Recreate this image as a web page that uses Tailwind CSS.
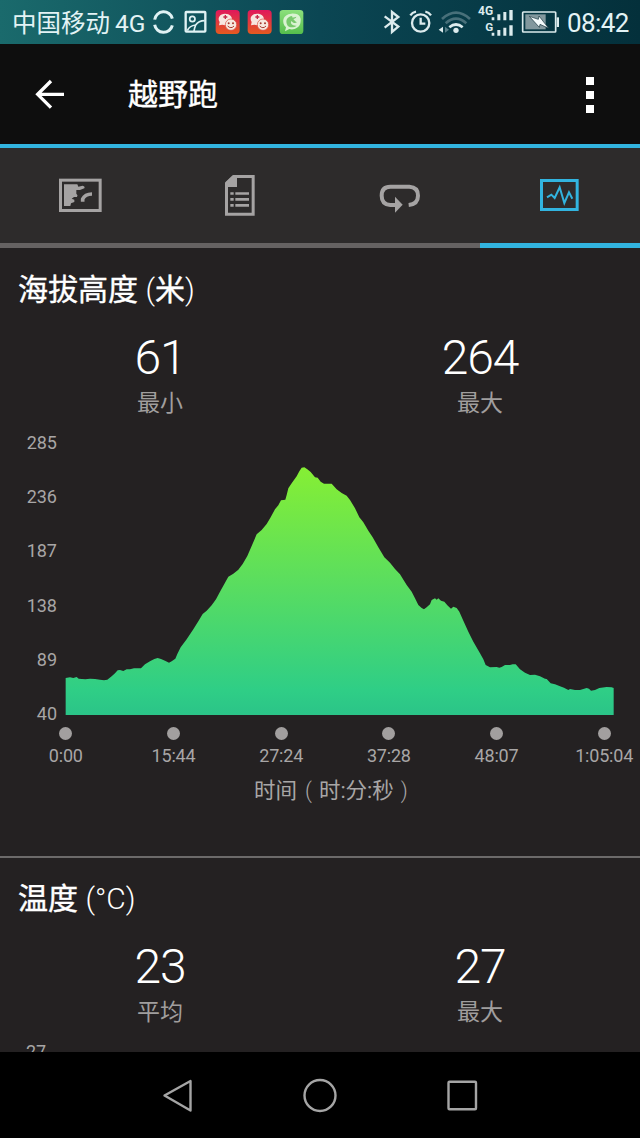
<!DOCTYPE html>
<html lang="zh-CN">
<head>
<meta charset="utf-8">
<title>越野跑</title>
<script src="https://cdn.jsdelivr.net/npm/@tailwindcss/browser@4"></script>
</head>
<body class="bg-black">
<div class="flex h-[1138px] w-[640px] flex-col overflow-hidden bg-[#242122] font-['Roboto','Noto_Sans_CJK_SC',sans-serif] text-white">

  <!-- status bar -->
  <header class="flex h-11 shrink-0 items-center bg-linear-to-r from-[#1a6a6c] via-[#0b4653] via-50% to-[#04303b] text-[#e3f3f5]">
    <div class="ml-3 w-[138px] whitespace-nowrap pt-[3px] text-[24.5px] leading-[41px]">中国移动 <span class="-ml-px">4G</span></div>
    <svg class="h-11 w-40 shrink-0" viewBox="450 0 480 132" fill="none">
      <g stroke="#e0f2f4" stroke-width="7">
        <path d="M464 59A27 27 0 0 1 517 56" stroke-width="9"/>
        <path d="M464 74A27 27 0 0 0 517 76" stroke-width="9"/>
        <rect x="557" y="36" width="59" height="59" rx="2" stroke-width="7"/>
        <circle cx="577" cy="57" r="8" stroke-width="5"/>
        <path d="M562 92C567 80 577 76 587 75C593 66 603 62 614 62M582 93C583 86 585 80 587 75" stroke-width="5"/>
      </g>
      <defs>
        <linearGradient id="red" x1="0" y1="0" x2="0" y2="1"><stop stop-color="#e0185c"/><stop offset="1" stop-color="#e45a20"/></linearGradient>
        <linearGradient id="grn" x1="0" y1="0" x2="0" y2="1"><stop stop-color="#8ce07c"/><stop offset="1" stop-color="#55bd4c"/></linearGradient>
        <g id="chat">
          <rect width="72" height="72" rx="11" fill="url(#red)"/>
          <path d="M10 46L12 36C4 24 13 11 28 11S50 20 49 31 38 46 28 46L20 44Z" fill="#f7e6e0"/>
          <path d="M29 15V27M23 21H35" stroke="#c52a4a" stroke-width="4"/>
          <circle cx="46" cy="44" r="17" fill="#f7e9e0" stroke="#d84a3c" stroke-width="2"/>
          <circle cx="39" cy="40" r="3" fill="#a53a30"/><circle cx="52" cy="40" r="3" fill="#a53a30"/>
          <path d="M36 48Q46 58 55 48" stroke="#a53a30" stroke-width="3"/>
        </g>
      </defs>
      <use href="#chat" x="647" y="30"/>
      <use href="#chat" x="743" y="30"/>
      <rect x="839" y="30" width="71" height="72" rx="10" fill="url(#grn)"/>
      <path d="M855 94L858 82C843 67 848 43 874 41S905 54 901 70 878 91 868 87Z" fill="#d9f3d2"/>
      <path d="M877 48C862 49 854 62 863 77C870 84 882 83 890 77C877 78 870 71 874 63C879 68 884 72 891 67C887 65 883 61 880 57C884 56 888 54 889 50C882 53 874 54 877 48Z" fill="#78c96d"/>
    </svg>
    <svg class="ml-[70px] h-11 w-[180px] shrink-0" viewBox="30 0 540 132" fill="none">
      <path d="M44 49L85 80L66 96V36L85 51L44 83" stroke="#dcebed" stroke-width="7"/>
      <g stroke="#dcebed" stroke-width="7">
        <circle cx="152" cy="69" r="26"/>
        <path d="M152 53V71H166"/>
        <path d="M121 46Q127 37 138 35M183 46Q177 37 166 35"/>
      </g>
      <g stroke-width="8">
        <path d="M216 57Q258 19 300 57" stroke="#48707a"/>
        <path d="M227 70Q258 42 289 70" stroke="#48707a"/>
        <path d="M238 82Q258 65 278 82" stroke="#dcebed"/>
      </g>
      <circle cx="258" cy="91" r="8" fill="#dcebed"/>
      <path d="M206 89L219 80V98Z" fill="#dcebed"/><path d="M237 89L225 80V98Z" fill="#58808a"/>
      <g fill="#dcebed" font-family="Roboto" font-weight="700">
        <text x="324" y="46" font-size="36">4G</text>
        <text x="346" y="92" font-size="35">G</text>
      </g>
      <g fill="#dcebed">
        <path d="M365 52h8v9h-8zM382 43h9v18h-9zM400 36h9v25h-9zM418 30h10v31h-10z"/>
        <path d="M365 98h8v9h-8zM382 90h9v17h-9zM400 83h9v24h-9zM418 76h10v31h-10z"/>
      </g>
      <rect x="458" y="36" width="99" height="60" rx="2" stroke="#dcebed" stroke-width="5"/>
      <path d="M560 52h7v29h-7z" fill="#dcebed"/>
      <rect x="466" y="43" width="61" height="45" fill="#82989e"/>
      <path d="M478 49L505 58L507 48L536 85L510 73L508 82Z" fill="#f4fbfc" stroke="#17343d" stroke-width="2"/>
    </svg>
    <div class="ml-[7px] whitespace-nowrap pt-[3px] text-[26px] leading-[41px] tracking-[-0.6px]">08:42</div>
  </header>

  <!-- app bar -->
  <div class="flex h-[104px] shrink-0 items-center border-b-4 border-[#32b4df] bg-[#0e0e0e]">
    <svg class="ml-[34px] size-8" viewBox="102 90 96 96" fill="none" stroke="#fff" stroke-width="10"><path d="M192 139H116M153 99L113 139L153 179"/></svg>
    <h1 class="ml-[62px] pt-0.5 text-[30px] leading-10 [-webkit-text-stroke:0.4px_white]">越野跑</h1>
    <div class="ml-auto mr-[46px] flex flex-col gap-[6px] pt-px">
      <i class="size-2 bg-white"></i><i class="size-2 bg-white"></i><i class="size-2 bg-white"></i>
    </div>
  </div>

  <!-- tabs -->
  <nav class="grid h-[100px] shrink-0 grid-cols-4 bg-[#2d2b2b]">
    <div class="flex items-center justify-center border-b-5 border-[#656262]">
      <svg class="size-12" viewBox="168 81 144 144" fill="none">
        <rect x="181.500" y="105.500" width="119" height="91" stroke="#a5a3a3" stroke-width="9"/>
        <path d="M192 118H232L235 125L248 122Q256 124 253 130L240 135H229V146Q235 150 231 156H222L215 161L223 164V171L213 175L211 183H192Z" fill="#a5a3a3"/>
        <path d="M248 170V162Q255 147 276 147" stroke="#a5a3a3" stroke-width="11" stroke-linejoin="round"/>
      </svg>
    </div>
    <div class="flex items-center justify-center border-b-5 border-[#656262]">
      <svg class="size-12" viewBox="648 81 144 144" fill="none">
        <path d="M679.500 116L702 94.500H759.500V207.500H679.500Z" stroke="#a5a3a3" stroke-width="9"/>
        <path d="M676 126V112L698 91H711V126Z" fill="#a5a3a3"/>
        <path d="M691 145.500h10M691 163h10M691 181h10M706 145.500h41M706 163h41M706 181h41" stroke="#a5a3a3" stroke-width="8"/>
      </svg>
    </div>
    <div class="flex items-center justify-center border-b-5 border-[#656262]">
      <svg class="size-12" viewBox="168 81 144 144" fill="none">
        <path d="M226 180H211Q185 178 185 152T211 125.500H268Q294 127 294 152T266 180" stroke="#a5a3a3" stroke-width="12"/>
        <path d="M225 155L248 179L225 203Z" fill="#a5a3a3"/>
      </svg>
    </div>
    <div class="flex items-center justify-center border-b-5 border-[#32b4df]">
      <svg class="size-12" viewBox="648 81 144 144" fill="none" stroke="#32b4df">
        <rect x="664.500" y="106.500" width="107" height="87" stroke-width="9"/>
        <path d="M681 157L694 149L704 159L719 127L733 174L747 142L757 161" stroke-width="6"/>
      </svg>
    </div>
  </nav>

  <main class="flex-1 overflow-hidden">
    <!-- elevation -->
    <section class="h-[610px] overflow-hidden border-b-2 border-[#6c6a6a] pt-[22px]">
      <h2 class="ml-[18px] text-[30px] leading-10 [-webkit-text-stroke:0.4px_white]">海拔高度 <span class="font-light [-webkit-text-stroke:0]">(</span>米<span class="font-light [-webkit-text-stroke:0]">)</span></h2>
      <div class="mt-6 grid grid-cols-2 text-center">
        <div><div class="text-[48px] font-light leading-[48px] tracking-[-1.2px]">61</div><div class="mt-[8px] text-[23px] leading-7 text-[#a09e9e]">最小</div></div>
        <div><div class="text-[48px] font-light leading-[48px] tracking-[-1.2px]">264</div><div class="mt-[8px] text-[23px] leading-7 text-[#a09e9e]">最大</div></div>
      </div>
      <div class="mt-[15px] flex h-[291px]">
        <div class="flex w-[57px] flex-col justify-between text-right text-lg leading-5 text-[#a8a6a6]">
          <span>285</span><span>236</span><span>187</span><span>138</span><span>89</span><span>40</span>
        </div>
        <svg class="ml-[3px] mt-[17px] h-[274px] w-[580px]" viewBox="0 0 1740 822">
          <defs><linearGradient id="alt" gradientUnits="userSpaceOnUse" x1="0" y1="50" x2="0" y2="795"><stop stop-color="#86ef34"/><stop offset=".5" stop-color="#57dc62"/><stop offset=".9" stop-color="#2fce86"/><stop offset="1" stop-color="#2bc488"/></linearGradient></defs>
          <path fill="url(#alt)" d="M17 795V684L30 682 40 684 50 681 56 686 76 688 90 686 105 687 120 689 132 691 142 689 155 679 165 670 173 661 180 660 190 663 200 658 210 658 222 655 243 655 255 643 270 634 283 627 293 624 303 627 315 632 327 638 335 634 346 626 352 612 362 592 380 568 400 538 415 514 428 492 440 482 455 466 468 448 480 425 495 398 505 380 520 371 535 359 548 342 562 318 575 288 590 253 605 240 620 222 632 202 645 178 655 166 663 151 676 149 680 135 685 115 695 100 710 79 718 64 725 53 733 52 742 58 752 66 765 82 773 83 782 95 792 101 815 101 830 118 845 129 860 137 870 150 885 175 898 202 910 217 925 242 938 262 955 292 973 322 990 338 1005 357 1020 373 1040 405 1055 425 1065 445 1075 465 1085 474 1092 478 1100 472 1110 463 1115 450 1125 445 1130 449 1135 445 1143 452 1153 455 1162 466 1173 476 1180 470 1190 474 1198 485 1210 512 1225 545 1240 575 1260 610 1270 628 1277 645 1290 652 1310 651 1318 653 1325 651 1335 645 1350 645 1358 643 1367 643 1380 658 1395 668 1410 675 1425 674 1440 679 1455 686 1460 687 1472 700 1485 703 1500 709 1512 713 1525 720 1530 717 1545 720 1560 720 1570 717 1580 714 1587 716 1593 722 1605 720 1618 714 1640 711 1655 712 1661 714V795Z"/>
        </svg>
      </div>
      <div class="ml-3 mt-[3px] grid w-[646px] grid-cols-6 text-center text-lg leading-5 tracking-[-0.2px] text-[#a8a6a6]">
        <div class="flex flex-col items-center gap-[6px]"><i class="size-[13px] rounded-full bg-[#a29f9f]"></i>0:00</div>
        <div class="flex flex-col items-center gap-[6px]"><i class="size-[13px] rounded-full bg-[#a29f9f]"></i>15:44</div>
        <div class="flex flex-col items-center gap-[6px]"><i class="size-[13px] rounded-full bg-[#a29f9f]"></i>27:24</div>
        <div class="flex flex-col items-center gap-[6px]"><i class="size-[13px] rounded-full bg-[#a29f9f]"></i>37:28</div>
        <div class="flex flex-col items-center gap-[6px]"><i class="size-[13px] rounded-full bg-[#a29f9f]"></i>48:07</div>
        <div class="flex flex-col items-center gap-[6px]"><i class="size-[13px] rounded-full bg-[#a29f9f]"></i>1:05:04</div>
      </div>
      <div class="ml-[254px] mt-[11px] flex whitespace-nowrap text-[21.5px] leading-7 text-[#a8a6a6]"><span>时间</span><span class="ml-2 mr-[7px] font-light">(</span><span>时:分:秒</span><span class="ml-[7px] font-light">)</span></div>
    </section>

    <!-- temperature -->
    <section class="pt-[21px]">
      <h2 class="ml-[18px] text-[30px] leading-10 [-webkit-text-stroke:0.4px_white]">温度 <span class="font-light [-webkit-text-stroke:0]">(°C)</span></h2>
      <div class="mt-6 grid grid-cols-2 text-center">
        <div><div class="text-[48px] font-light leading-[48px] tracking-[-1.2px]">23</div><div class="mt-[8px] text-[23px] leading-7 text-[#a09e9e]">平均</div></div>
        <div><div class="text-[48px] font-light leading-[48px] tracking-[-1.2px]">27</div><div class="mt-[8px] text-[23px] leading-7 text-[#a09e9e]">最大</div></div>
      </div>
      <div class="ml-[26px] mt-[15px] text-lg leading-5 text-[#a8a6a6]">27</div>
    </section>
  </main>

  <!-- system navigation -->
  <footer class="flex h-[86px] shrink-0 items-center justify-center bg-black">
    <div class="grid w-[426px] grid-cols-3 justify-items-center">
      <svg class="size-10" viewBox="0 0 40 40" fill="none" stroke="#a5a5a5" stroke-width="2.400" stroke-linejoin="round"><path d="M6.500 20.500L32.500 6V35.500Z"/></svg>
      <svg class="size-10" viewBox="0 0 40 40" fill="none" stroke="#a5a5a5" stroke-width="2.400"><circle cx="20" cy="20.500" r="15.500"/></svg>
      <svg class="size-10" viewBox="0 0 40 40" fill="none" stroke="#a5a5a5" stroke-width="2.400"><rect x="6.500" y="6.800" width="27.500" height="27.500" rx="1"/></svg>
    </div>
  </footer>
</div>
</body>
</html>
